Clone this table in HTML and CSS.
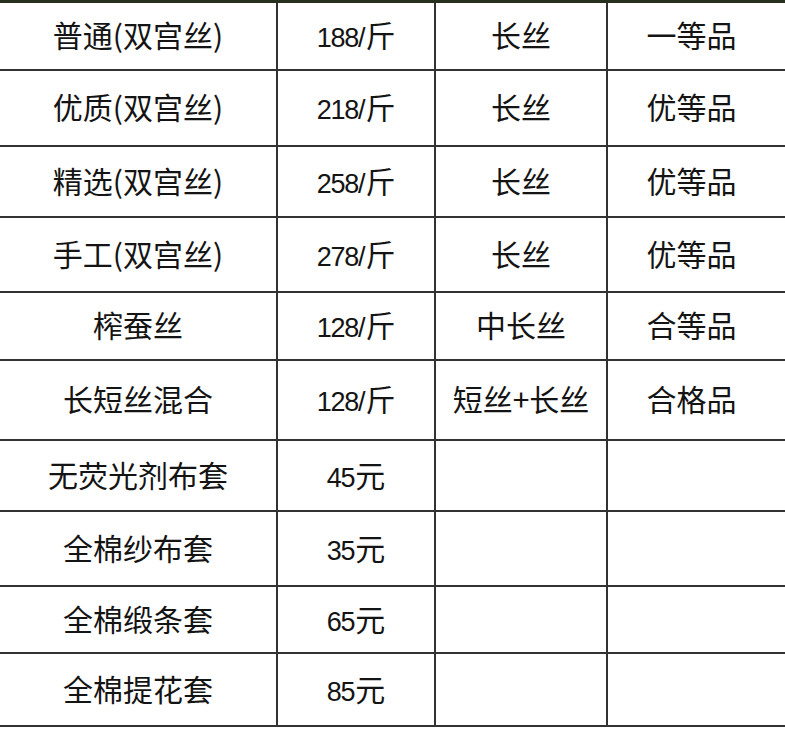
FILE: index.html
```html
<!DOCTYPE html>
<html lang="zh-CN">
<head>
<meta charset="utf-8">
<title>蚕丝被价格表</title>
<link rel="stylesheet" href="styles.css">
</head>
<body>
<div class="sheet">
  <div class="cell">普通(双宫丝)</div><div class="cell"><span class="price"><span class="num">188/</span>斤</span></div><div class="cell">长丝</div><div class="cell last">一等品</div>
  <div class="cell">优质(双宫丝)</div><div class="cell"><span class="price"><span class="num">218/</span>斤</span></div><div class="cell">长丝</div><div class="cell last">优等品</div>
  <div class="cell">精选(双宫丝)</div><div class="cell"><span class="price"><span class="num">258/</span>斤</span></div><div class="cell">长丝</div><div class="cell last">优等品</div>
  <div class="cell">手工(双宫丝)</div><div class="cell"><span class="price"><span class="num">278/</span>斤</span></div><div class="cell">长丝</div><div class="cell last">优等品</div>
  <div class="cell">榨蚕丝</div><div class="cell"><span class="price"><span class="num">128/</span>斤</span></div><div class="cell">中长丝</div><div class="cell last">合等品</div>
  <div class="cell">长短丝混合</div><div class="cell"><span class="price"><span class="num">128/</span>斤</span></div><div class="cell">短丝+长丝</div><div class="cell last">合格品</div>
  <div class="cell">无荧光剂布套</div><div class="cell"><span class="price"><span class="num">45</span>元</span></div><div class="cell"></div><div class="cell last"></div>
  <div class="cell">全棉纱布套</div><div class="cell"><span class="price"><span class="num">35</span>元</span></div><div class="cell"></div><div class="cell last"></div>
  <div class="cell">全棉缎条套</div><div class="cell"><span class="price"><span class="num">65</span>元</span></div><div class="cell"></div><div class="cell last"></div>
  <div class="cell">全棉提花套</div><div class="cell"><span class="price"><span class="num">85</span>元</span></div><div class="cell"></div><div class="cell last"></div>
</div>
</body>
</html>
```
FILE: styles.css
```css
html, body {
  margin: 0;
  padding: 0;
  background: #ffffff;
}
.sheet {
  display: grid;
  grid-template-columns: 278px 158px 172px 1fr;
  grid-template-rows: 68px 76px 71px 75px 68px 80px 71px 75px 67px 73px;
  border-top: 3px solid #27301f;
  width: 785px;
  font-family: "Noto Sans CJK SC", "Liberation Sans", sans-serif;
  font-size: 30px;
  font-weight: 400;
  color: #141414;
}
.cell {
  box-sizing: border-box;
  display: flex;
  align-items: center;
  justify-content: center;
  padding-bottom: 4px;
  border-right: 2px solid #323232;
  border-bottom: 2px solid #323232;
  white-space: nowrap;
}
.cell.last {
  border-right: none;
  padding-right: 10px;
}
.price {
  display: block;
}
.num {
  font-family: "Liberation Sans", "Noto Sans CJK SC", sans-serif;
  font-size: 27px;
  letter-spacing: -1.2px;
  margin-right: 1px;
}
```
